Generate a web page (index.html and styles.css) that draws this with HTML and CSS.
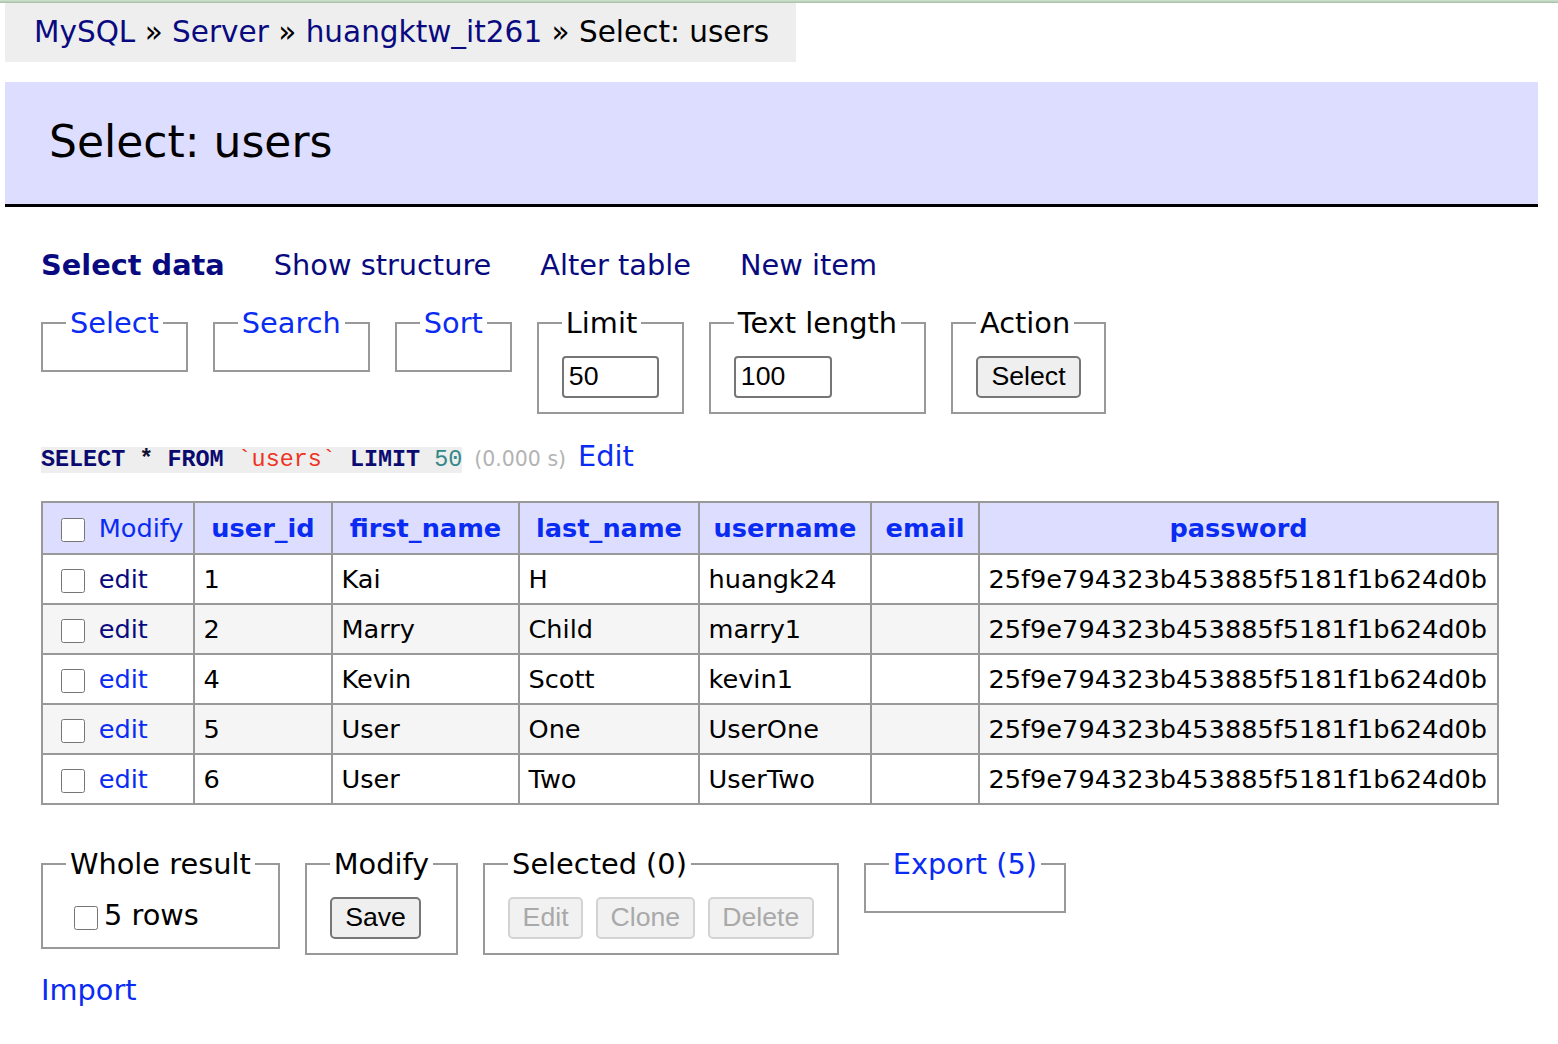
FILE: index.html
```html
<!DOCTYPE html>
<html lang="en">
<head>
<meta charset="utf-8">
<title>Select: users - Adminer</title>
<link rel="stylesheet" href="styles.css">
</head>
<body>
<div class="topline"></div>
<p class="breadcrumb"><a class="visited" href="#">MySQL</a> » <a class="visited" href="#">Server</a> » <a class="visited" href="#">huangktw_it261</a> » Select: users</p>
<h2 class="title">Select: users</h2>
<div class="content">
  <p class="menu">
    <a class="visited strong" href="#">Select data</a>
    <a class="visited" href="#">Show structure</a>
    <a class="visited" href="#">Alter table</a>
    <a class="visited" href="#">New item</a>
  </p>
  <form class="filters">
    <fieldset class="fs"><legend><a class="link" href="#">Select</a></legend></fieldset>
    <fieldset class="fs"><legend><a class="link" href="#">Search</a></legend></fieldset>
    <fieldset class="fs"><legend><a class="link" href="#">Sort</a></legend></fieldset>
    <fieldset class="fs"><legend>Limit</legend><input class="field w97" type="text" value="50"></fieldset>
    <fieldset class="fs"><legend>Text length</legend><input class="field w98" type="text" value="100"></fieldset>
    <fieldset class="fs"><legend>Action</legend><button class="btn" type="button">Select</button></fieldset>
  </form>
  <p class="sql"><code class="code"><span class="kw">SELECT</span> <span class="op">*</span> <span class="kw">FROM</span> <span class="bac">`users`</span> <span class="kw">LIMIT</span> <span class="num">50</span></code><span class="time">(0.000 s)</span><a class="link edit-sql" href="#">Edit</a></p>
  <table class="data">
    <colgroup>
      <col class="c1"><col class="c2"><col class="c3"><col class="c4"><col class="c5"><col class="c6"><col class="c7">
    </colgroup>
    <thead>
      <tr>
        <td class="chk"><input class="cb" type="checkbox"> <a class="link" href="#">Modify</a></td>
        <th><a class="link" href="#">user_id</a></th>
        <th><a class="link" href="#">first_name</a></th>
        <th><a class="link" href="#">last_name</a></th>
        <th><a class="link" href="#">username</a></th>
        <th><a class="link" href="#">email</a></th>
        <th><a class="link" href="#">password</a></th>
      </tr>
    </thead>
    <tbody>
      <tr><td class="chk"><input class="cb" type="checkbox"> <a class="visited" href="#">edit</a></td><td>1</td><td>Kai</td><td>H</td><td>huangk24</td><td></td><td>25f9e794323b453885f5181f1b624d0b</td></tr>
      <tr><td class="chk"><input class="cb" type="checkbox"> <a class="visited" href="#">edit</a></td><td>2</td><td>Marry</td><td>Child</td><td>marry1</td><td></td><td>25f9e794323b453885f5181f1b624d0b</td></tr>
      <tr><td class="chk"><input class="cb" type="checkbox"> <a class="link" href="#">edit</a></td><td>4</td><td>Kevin</td><td>Scott</td><td>kevin1</td><td></td><td>25f9e794323b453885f5181f1b624d0b</td></tr>
      <tr><td class="chk"><input class="cb" type="checkbox"> <a class="link" href="#">edit</a></td><td>5</td><td>User</td><td>One</td><td>UserOne</td><td></td><td>25f9e794323b453885f5181f1b624d0b</td></tr>
      <tr><td class="chk"><input class="cb" type="checkbox"> <a class="link" href="#">edit</a></td><td>6</td><td>User</td><td>Two</td><td>UserTwo</td><td></td><td>25f9e794323b453885f5181f1b624d0b</td></tr>
    </tbody>
  </table>
  <form class="actions">
    <fieldset class="fs"><legend>Whole result</legend><label class="rows"><input class="cb cb-all" type="checkbox">5 rows</label></fieldset>
    <fieldset class="fs"><legend>Modify</legend><button class="btn" type="button">Save</button></fieldset>
    <fieldset class="fs"><legend>Selected (0)</legend><div class="btnrow"><button class="btn" type="button" disabled>Edit</button><button class="btn" type="button" disabled>Clone</button><button class="btn" type="button" disabled>Delete</button></div></fieldset>
    <fieldset class="fs"><legend><a class="link" href="#">Export (5)</a></legend></fieldset>
  </form>
  <p class="import"><a class="link" href="#">Import</a></p>
</div>
</body>
</html>
```

FILE: styles.css
```css
html, body {
  margin: 0;
  padding: 0;
  background: #fff;
}

body {
  font-family: "DejaVu Sans", Verdana, sans-serif;
  font-size: 28.8px;
  line-height: 36px;
  color: #000;
}

a {
  text-decoration: none;
}

.link {
  color: #0a2cf2;
}

.visited {
  color: #0a0a80;
}

.topline {
  height: 3px;
  background: linear-gradient(#d2e4d2, #a4bea4);
}

.breadcrumb {
  margin: 0 0 0 5px;
  width: 762px;
  height: 59px;
  padding-left: 29px;
  line-height: 59px;
  font-size: 29.5px;
  background: #eee;
  white-space: nowrap;
}

.title {
  margin: 20px 0 0 5px;
  width: 1489px;
  height: 122px;
  padding: 0 0 0 44px;
  line-height: 120px;
  font-size: 44px;
  font-weight: normal;
  background: #ddf;
  border-bottom: 3px solid #000;
}

.content {
  margin-left: 41px;
}

.menu {
  margin: 40px 0 0 0;
  display: flex;
  gap: 49px;
  height: 36px;
}

.strong {
  font-weight: bold;
}

.filters,
.actions {
  display: flex;
  align-items: flex-start;
  gap: 25px;
  margin: 22px 0 0 0;
}

.actions {
  margin-top: 41px;
}

.fs {
  margin: 0;
  padding: 14.5px 23px;
  border: 2px solid #999;
  min-width: 0;
}

.fs legend {
  padding: 0 4px;
  line-height: 36px;
  white-space: nowrap;
}

.field {
  display: block;
  box-sizing: border-box;
  height: 42px;
  margin: 0;
  padding: 0 5px;
  border: 2px solid #767676;
  border-radius: 4px;
  font-family: "Liberation Sans", Arial, sans-serif;
  font-size: 26.67px;
  color: #000;
  background: #fff;
}

.w97 { width: 97px; }
.w98 { width: 98px; }

.btn {
  display: block;
  box-sizing: border-box;
  height: 42px;
  margin: 0;
  padding: 0 13.5px;
  border: 2px solid #767676;
  border-radius: 5px;
  background: #efefef;
  font-family: "Liberation Sans", Arial, sans-serif;
  font-size: 26.67px;
  color: #000;
}

.btn:disabled {
  padding: 0 12.5px;
  background: #f1f1f1;
  border-color: #d3d3d3;
  color: #a9a9a9;
}

.btnrow {
  display: flex;
  gap: 13px;
}

.sql {
  margin: 24px 0 0 0;
  height: 36px;
  display: flex;
  align-items: baseline;
  white-space: pre;
}

.code {
  font-family: "Liberation Mono", "Courier New", monospace;
  font-size: 23.4px;
  line-height: 26px;
  background: #eee;
}

.kw, .op {
  font-weight: bold;
  color: #0a0a70;
}

.op {
  color: #111133;
}

.bac {
  color: #ee3322;
}

.num {
  color: #338888;
}

.time {
  margin-left: 12px;
  font-size: 20.5px;
  color: #b3b3b3;
}

.edit-sql {
  margin-left: 12px;
}

.data {
  margin-top: 27px;
  width: 1456px;
  table-layout: fixed;
  border-collapse: collapse;
  border: 2px solid #999;
  font-size: 25.6px;
  line-height: 32px;
}

.c1 { width: 152px; }
.c2 { width: 138px; }
.c3 { width: 187px; }
.c4 { width: 180px; }
.c5 { width: 172px; }
.c6 { width: 108px; }
.c7 { width: 519px; }

.data th,
.data td {
  height: 50px;
  box-sizing: border-box;
  padding: 0 8.5px;
  border: 2px solid #999;
  vertical-align: middle;
  white-space: nowrap;
  overflow: hidden;
}

.data thead th,
.data thead td {
  height: 52px;
  background: #ddf;
}

.data th {
  font-weight: bold;
  text-align: center;
}

.data tbody tr:nth-child(2n) {
  background: #f5f5f5;
}

.cb {
  width: 24px;
  height: 24px;
  margin: 0 6px 0 9px;
  vertical-align: -5px;
}

.rows {
  display: block;
  white-space: nowrap;
}

.cb-all {
  margin: 0 6px 0 8px;
}

.import {
  margin: 17px 0 0 0;
}
```
